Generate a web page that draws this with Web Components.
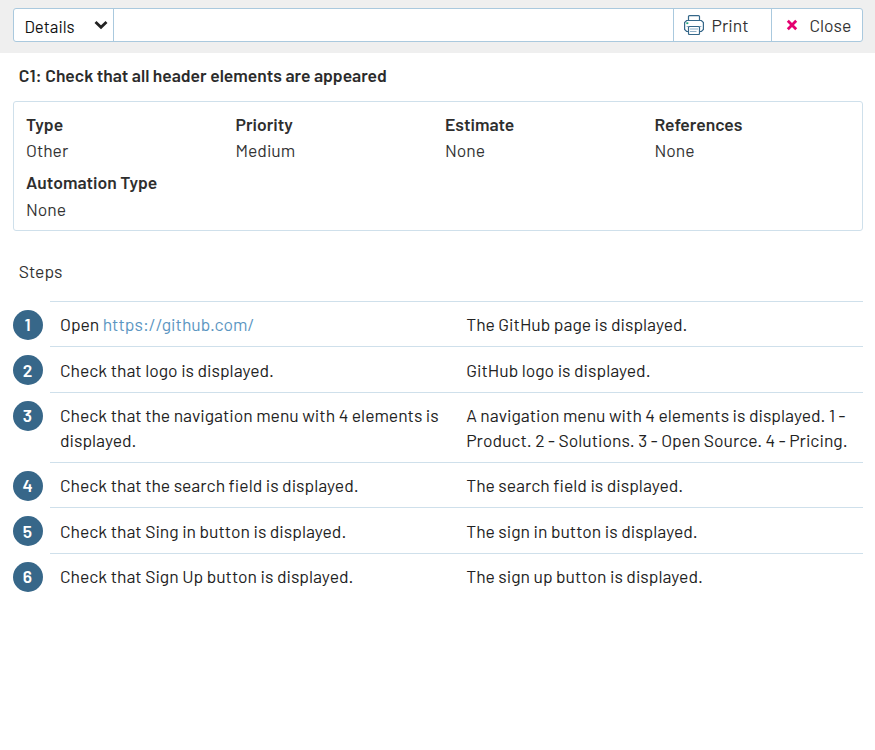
<!DOCTYPE html>
<html lang="en">
<head>
<meta charset="utf-8">
<title>C1: Check that all header elements are appeared</title>
<style>
body { margin: 0; background: #fff; color: #2b2b2b; font: 17.5px/25px Barlow, Roboto, "Liberation Sans", sans-serif; }
</style>
</head>
<body>
<case-page></case-page>
<script>
const define = (name, html, setup) => {
  const template = document.createElement('template');
  template.innerHTML = html;
  customElements.define(name, class extends HTMLElement {
    connectedCallback() {
      if (this.shadowRoot) return;
      this.attachShadow({ mode: 'open' }).append(template.content.cloneNode(true));
      if (setup) setup(this, this.shadowRoot);
    }
  });
};

define('text-line', `<style>:host { display: block; width: max-content; white-space: nowrap; }</style><slot></slot>`);

define('printer-icon', `
<style>:host { display: block; width: 20px; height: 20px; } svg { display: block; }</style>
<svg width="20" height="20" viewBox="0 0 20 20" fill="none" stroke="#356789" stroke-width="1.2">
  <path d="M4.500 5.500V1.600Q4.500.600 5.500.600H14.500Q15.500.600 15.500 1.600V5.500"/>
  <path d="M4.500 16.500H2.600L.600 14.500V7.500L2.600 5.500H17.400L19.400 7.500V14.500L17.400 16.500H15.500"/>
  <path d="M2.600 11.500H17.400" stroke="#8fb0c7" stroke-width="1"/>
  <rect x="4.500" y="11.500" width="11" height="8" rx="1" fill="#fff"/>
  <path d="M6 14H14M6 16.500H12.500" stroke="#8fb0c7" stroke-width="1.200"/>
  <path d="M2.300 8.200H4.300" stroke="#20a77b" stroke-width="1.800"/>
</svg>`);

define('close-icon', `
<style>:host { display: block; width: 12px; height: 12px; } svg { display: block; }</style>
<svg width="12" height="12" viewBox="0 0 12 12"><path d="M1.800 1.800L10.200 10.200M10.200 1.800L1.800 10.200" stroke="#e40070" stroke-width="2.800"/></svg>`);

define('tool-bar', `
<style>
:host { display: block; background: #efefef; height: 53px; box-sizing: border-box; padding: 8px 12px 11px 13px; }
.bar { display: flex; box-sizing: border-box; height: 34px; border: 1px solid #aac9de; border-radius: 3px; background: #fff; }
.cell { display: flex; align-items: center; box-sizing: border-box; color: #333; }
.view { width: 100px; border-right: 1px solid #aac9de; padding: 3px 5px 0 10.500px; justify-content: space-between; color: #111; font-size: 16.800px; }
.chevron { margin-top: -4px; }
.space { flex: 1; }
.print { width: 98px; border-left: 1px solid #aac9de; padding: 1px 0 0 10px; gap: 7.600px; }
.close { width: 91px; border-left: 1px solid #aac9de; padding: 1px 0 0 14px; gap: 11.400px; }
printer-icon, close-icon { margin-top: -2px; }
</style>
<div class="bar">
  <div class="cell view"><text-line>Details</text-line>
    <svg class="chevron" width="14" height="10" viewBox="0 0 14 10"><path d="M1.500 1.900L7 7.200L12.500 1.900" fill="none" stroke="#222" stroke-width="2.800"/></svg></div>
  <div class="space"></div>
  <div class="cell print"><printer-icon></printer-icon><text-line>Print</text-line></div>
  <div class="cell close"><close-icon></close-icon><text-line>Close</text-line></div>
</div>`);

define('info-field', `
<style>
:host { display: block; }
.label { font-weight: 600; height: var(--label-height, 26px); color: #2e2e2e; }
.value { color: #333; }
</style>
<div class="label"><slot name="label"></slot></div><div class="value"><slot></slot></div>`);

define('info-panel', `
<style>
:host { display: grid; grid-template-columns: repeat(4, 209.500px); grid-template-rows: 58px auto; box-sizing: border-box;
  height: 130px; margin: 0 12px 0 13px; padding: 10px 0 0 12px; border: 1px solid #cfe0eb; border-radius: 3px; }
</style><slot></slot>`);

define('step-row', `
<style>
:host { display: grid; grid-template-columns: 37px 1fr; --nudge: 0px; }
:host([height="46"]) { --nudge: 1px; }
.badge { box-sizing: border-box; width: 30px; height: 30px; margin-top: 9px; border-radius: 50%; background: #376789; color: #fff;
  font-weight: 600; line-height: 28px; text-align: center; padding: var(--nudge) 1px 0 0; }
.content { display: grid; grid-template-columns: 406.250px 1fr; border-top: 1px solid #cfe0eb; padding: calc(10px + var(--nudge)) 0 0 10px; color: #222; }
</style>
<div class="badge"></div>
<div class="content"><div><slot name="action"></slot></div><div><slot name="result"></slot></div></div>`, (host, root) => {
  root.querySelector('.badge').textContent = host.getAttribute('number');
  host.style.height = host.getAttribute('height') + 'px';
});

define('case-page', `
<style>
:host { display: block; height: 750px; overflow: hidden; }
h1 { margin: 0; padding: 10px 0 0 18.750px; height: 38px; font-size: inherit; font-weight: 600; line-height: 25px; color: #2b2b2b; }
h2 { margin: 0; padding: 28px 0 0 18.750px; height: 42px; font: inherit; color: #333; }
.steps { padding: 0 12px 0 13px; }
a { color: #5c96c2; text-decoration: none; }
</style>
<tool-bar></tool-bar>
<h1><text-line>C1: Check that all header elements are appeared</text-line></h1>
<info-panel>
  <info-field><text-line slot="label">Type</text-line><text-line>Other</text-line></info-field>
  <info-field><text-line slot="label">Priority</text-line><text-line>Medium</text-line></info-field>
  <info-field><text-line slot="label">Estimate</text-line><text-line>None</text-line></info-field>
  <info-field><text-line slot="label">References</text-line><text-line>None</text-line></info-field>
  <info-field style="--label-height: 27px"><text-line slot="label">Automation Type</text-line><text-line>None</text-line></info-field>
</info-panel>
<h2><text-line>Steps</text-line></h2>
<div class="steps">
  <step-row number="1" height="45"><text-line slot="action">Open <a href="https://github.com/">https://github.com/</a></text-line><text-line slot="result">The GitHub page is displayed.</text-line></step-row>
  <step-row number="2" height="46"><text-line slot="action">Check that logo is displayed.</text-line><text-line slot="result">GitHub logo is displayed.</text-line></step-row>
  <step-row number="3" height="70"><div slot="action"><text-line>Check that the navigation menu with 4 elements is</text-line><text-line>displayed.</text-line></div><div slot="result"><text-line>A navigation menu with 4 elements is displayed. 1 -</text-line><text-line>Product. 2 - Solutions. 3 - Open Source. 4 - Pricing.</text-line></div></step-row>
  <step-row number="4" height="45"><text-line slot="action">Check that the search field is displayed.</text-line><text-line slot="result">The search field is displayed.</text-line></step-row>
  <step-row number="5" height="46"><text-line slot="action">Check that Sing in button is displayed.</text-line><text-line slot="result">The sign in button is displayed.</text-line></step-row>
  <step-row number="6" height="45"><text-line slot="action">Check that Sign Up button is displayed.</text-line><text-line slot="result">The sign up button is displayed.</text-line></step-row>
</div>`);
</script>
</body>
</html>
